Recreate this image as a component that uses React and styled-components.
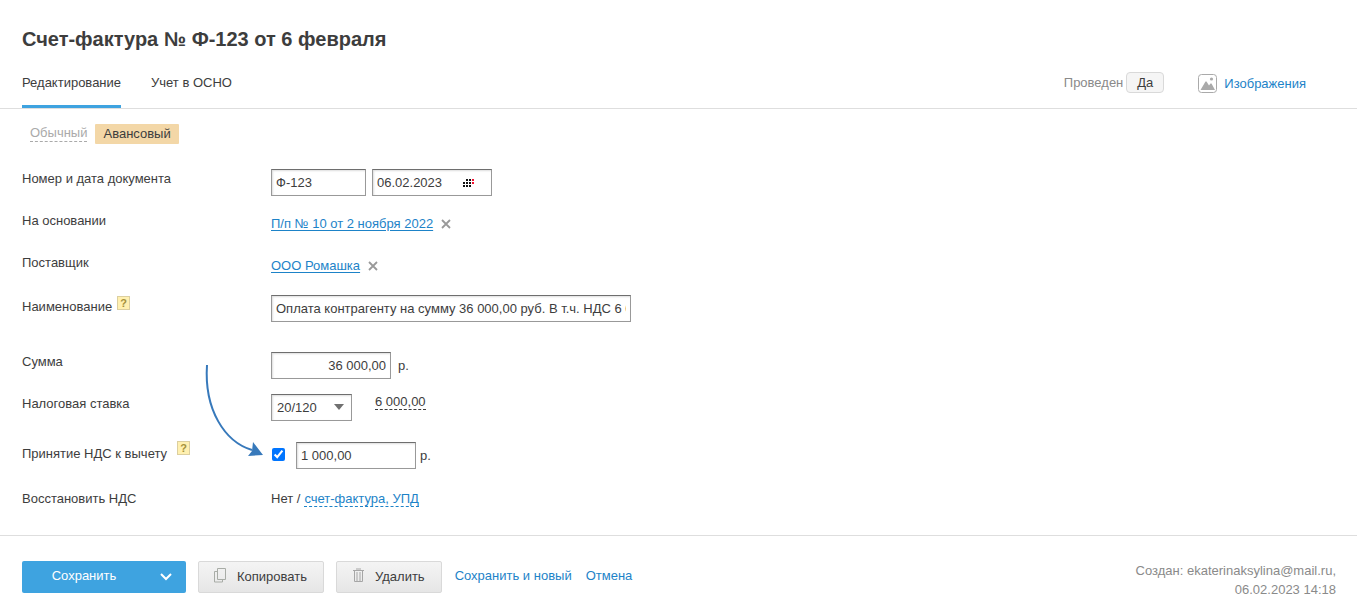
import React from "react";
import styled, { createGlobalStyle, css } from "styled-components";

const GlobalStyle = createGlobalStyle`
  *, *::before, *::after { box-sizing: border-box; }
  body { margin: 0; background: #fff; }
  body, button, input, select {
    font-family: "Liberation Sans", Arial, sans-serif;
    font-size: 13px;
    color: #3d3d3d;
  }
  body { line-height: 20px; }
  button { padding: 0; border: 0; background: none; cursor: pointer; line-height: 20px; }
`;

const Page = styled.main`
  padding-top: 26px;
`;

const Title = styled.h1`
  margin: 0;
  padding: 0 22px;
  font-size: 20px;
  line-height: 26px;
`;

const TabBar = styled.div`
  display: flex;
  justify-content: space-between;
  align-items: flex-end;
  margin-top: 20px;
  padding: 0 51px 0 22px;
  border-bottom: 1px solid #dedede;
`;

const Tabs = styled.nav`
  display: flex;
  gap: 30px;
`;

const Tab = styled.a`
  height: 36px;
  margin-top: -1px;
  padding-top: 1px;
  color: inherit;
  text-decoration: none;
  border-bottom: 3px solid ${(p) => (p.$active ? "#3ea3e0" : "transparent")};
`;

const Status = styled.div`
  display: flex;
  align-items: center;
  height: 21px;
  margin-bottom: 15px;
`;

const StatusLabel = styled.span`
  color: #8a8a8a;
`;

const StatusButton = styled.button`
  width: 38px;
  height: 21px;
  margin: 0 34px 0 3px;
  border: 1px solid #d9d9d9;
  border-radius: 4px;
  background: #f5f5f5;
`;

const ImagesLink = styled.a`
  display: flex;
  align-items: center;
  gap: 7px;
  padding-top: 2px;
  color: #1d83c8;
  text-decoration: none;
`;

const KindSwitch = styled.div`
  display: flex;
  gap: 8px;
  padding: 15px 30px 0;
`;

const dashed = css`
  line-height: 16px;
  border-bottom: 1px dashed currentColor;
`;

const KindOption = styled.button`
  ${(p) =>
    p.$selected
      ? css`
          height: 20px;
          padding: 0 8px;
          background: #f3d7a7;
          border-radius: 1px;
        `
      : css`
          ${dashed}
          height: 18px;
          color: #aaa;
        `}
`;

const Form = styled.form`
  position: relative;
  padding: 25px 22px 0;
`;

const Row = styled.div`
  display: grid;
  grid-template-columns: 249px 1fr;
  align-items: start;
  min-height: ${(p) => p.$height}px;
`;

const Label = styled.label`
  padding-top: ${(p) => p.$top || 0}px;
`;

const LabelCell = styled.div`
  display: flex;
  align-items: flex-start;
  gap: ${(p) => p.$gap}px;
`;

const Help = styled.button`
  width: 13px;
  height: 14px;
  margin-top: 1px;
  border: 1px solid #dccf9f;
  background: #fff0b0;
  color: #a5913c;
  font-size: 11px;
  font-weight: bold;
  line-height: 12px;
`;

const Value = styled.div`
  display: flex;
  align-items: ${(p) => p.$align || "center"};
  padding-top: ${(p) => p.$top || 0}px;
`;

const box = css`
  height: 27px;
  border: 1px solid #999;
  border-top-color: #6e6e6e;
  background: #fff;
  box-shadow: inset 1px 1px 2px #ddd;
`;

const Input = styled.input`
  ${box}
  width: ${(p) => p.$width}px;
  padding: 0 4px;
  text-align: ${(p) => p.$align || "left"};
  outline: none;
`;

const DateBox = styled.div`
  ${box}
  display: flex;
  align-items: center;
  width: 120px;
  margin-left: 6px;
  padding-left: 4px;
`;

const DateInput = styled.input`
  width: 86px;
  padding: 0;
  border: 0;
  background: none;
  outline: none;
`;

const CalendarButton = styled.button`
  display: flex;
`;

const DocLink = styled.a`
  color: #1d83c8;
  text-decoration: underline;
  text-underline-offset: 2px;
`;

const Clear = styled.button`
  display: flex;
  margin-left: 8px;
`;

const SelectBox = styled.div`
  position: relative;
  display: flex;
`;

const Select = styled.select`
  ${box}
  width: 81px;
  padding: 0 5px;
  appearance: none;
  border-radius: 0;
  outline: none;
`;

const SelectArrow = styled.svg`
  position: absolute;
  right: 8px;
  top: 10px;
  pointer-events: none;
`;

const InlineEdit = styled.button`
  ${dashed}
  height: 16px;
  color: ${(p) => (p.$link ? "#1d83c8" : "inherit")};
  margin-left: ${(p) => (p.$link ? 4 : 23)}px;
`;

const Unit = styled.span`
  margin-left: ${(p) => p.$gap}px;
`;

const Check = styled.input`
  width: 13px;
  height: 13px;
  margin: 0 11px 3px 1px;
`;

const Pointer = styled.svg`
  position: absolute;
  left: 200px;
  top: 216px;
  pointer-events: none;
`;

const Footer = styled.footer`
  display: flex;
  justify-content: space-between;
  align-items: flex-start;
  margin-top: 16px;
  padding: 25px 21px 14px 22px;
  border-top: 1px solid #dedede;
`;

const Actions = styled.div`
  display: flex;
  gap: 12px;
`;

const SplitButton = styled.div`
  display: flex;
`;

const Save = styled.button`
  width: 124px;
  height: 32px;
  padding-bottom: 2px;
  border-radius: 2px 0 0 2px;
  background: #3ea3e0;
  color: #fff;
`;

const SaveMore = styled.button`
  display: flex;
  align-items: center;
  justify-content: center;
  width: 40px;
  height: 32px;
  border-radius: 0 2px 2px 0;
  background: #3ea3e0;
`;

const GrayButton = styled.button`
  display: flex;
  align-items: center;
  gap: 10px;
  height: 32px;
  padding: 0 16px 0 15px;
  border: 1px solid #d9d9d9;
  border-radius: 2px;
  background: linear-gradient(#f4f4f4, #e6e6e6);

  svg { margin-bottom: 4px; }
`;

const TextActions = styled.div`
  display: flex;
  gap: 14px;
  margin-left: 1px;
  padding-top: 5px;
`;

const TextAction = styled.a`
  color: #1d83c8;
  text-decoration: none;
`;

const Created = styled.div`
  color: #8a8a8a;
  text-align: right;
  line-height: 19px;
`;

const CrossIcon = () => (
  <svg width="10" height="10" viewBox="0 0 10 10" fill="none" stroke="#999" strokeWidth="1.8">
    <path d="M1 1l8 8M9 1L1 9" />
  </svg>
);

const calendarDots = [
  [3, 0], [6, 0], [9, 0],
  [0, 3], [3, 3], [6, 3], [9, 3],
  [0, 6], [3, 6], [6, 6],
];

const CalendarIcon = () => (
  <svg width="11" height="8" shapeRendering="crispEdges">
    {calendarDots.map(([x, y]) => (
      <rect key={`${x}-${y}`} x={x} y={y} width="2" height="2" fill={x === 9 ? "#f01030" : "#111"} />
    ))}
  </svg>
);

const PictureIcon = () => (
  <svg width="19" height="19" viewBox="0 0 19 19">
    <rect x="0.5" y="0.5" width="18" height="18" rx="3" fill="#fff" stroke="#aaa" />
    <path d="M2.500 16L7.500 7.500h1L11 11.500l1.500-2h1L17 16z" fill="#aaa" />
    <circle cx="13.500" cy="5" r="1.600" fill="#aaa" />
  </svg>
);

const CopyIcon = () => (
  <svg width="13" height="15" viewBox="0 0 13 15" fill="none" stroke="#a8aca6">
    <path d="M3.500 0.500h8v11h-8zM3 3.500H0.500v10.500h8V12" />
  </svg>
);

const TrashIcon = () => (
  <svg width="13" height="15" viewBox="0 0 13 15" fill="none" stroke="#a6a6a6">
    <path d="M1 2.500h11M4 1h5M2.500 3v10.500h8V3M5 4v9M8 4v9" />
  </svg>
);

export default function App() {
  return (
    <Page>
      <GlobalStyle />
      <Title>Счет-фактура № Ф-123 от 6 февраля</Title>
      <TabBar>
        <Tabs>
          <Tab href="#edit" $active>Редактирование</Tab>
          <Tab href="#osno">Учет в ОСНО</Tab>
        </Tabs>
        <Status>
          <StatusLabel>Проведен</StatusLabel>
          <StatusButton type="button">Да</StatusButton>
          <ImagesLink href="#images">
            <PictureIcon />
            Изображения
          </ImagesLink>
        </Status>
      </TabBar>

      <KindSwitch>
        <KindOption type="button">Обычный</KindOption>
        <KindOption type="button" $selected>Авансовый</KindOption>
      </KindSwitch>

      <Form id="invoice">
        <Row $height={42}>
          <Label htmlFor="number">Номер и дата документа</Label>
          <Value>
            <Input id="number" $width={95} defaultValue="Ф-123" />
            <DateBox>
              <DateInput aria-label="Дата документа" defaultValue="06.02.2023" />
              <CalendarButton type="button" aria-label="Календарь"><CalendarIcon /></CalendarButton>
            </DateBox>
          </Value>
        </Row>
        <Row $height={42}>
          <span>На основании</span>
          <Value $top={3}>
            <DocLink href="#payment">П/п № 10 от 2 ноября 2022</DocLink>
            <Clear type="button" aria-label="Убрать основание"><CrossIcon /></Clear>
          </Value>
        </Row>
        <Row $height={42}>
          <span>Поставщик</span>
          <Value $top={3}>
            <DocLink href="#supplier">ООО Ромашка</DocLink>
            <Clear type="button" aria-label="Убрать поставщика"><CrossIcon /></Clear>
          </Value>
        </Row>
        <Row $height={57}>
          <LabelCell $gap={5}>
            <Label htmlFor="name" $top={2}>Наименование</Label>
            <Help type="button">?</Help>
          </LabelCell>
          <Value>
            <Input id="name" $width={360} defaultValue="Оплата контрагенту на сумму 36 000,00 руб. В т.ч. НДС 6 000,00 руб." />
          </Value>
        </Row>
        <Row $height={42}>
          <Label htmlFor="sum">Сумма</Label>
          <Value>
            <Input id="sum" $width={120} $align="right" defaultValue="36 000,00" />
            <Unit $gap={7}>р.</Unit>
          </Value>
        </Row>
        <Row $height={46}>
          <Label htmlFor="rate">Налоговая ставка</Label>
          <Value $align="flex-start">
            <SelectBox>
              <Select id="rate" defaultValue="20/120">
                <option>20/120</option>
                <option>10/110</option>
              </Select>
              <SelectArrow width="10" height="6"><path d="M0 0h10L5 6z" fill="#707070" /></SelectArrow>
            </SelectBox>
            <InlineEdit type="button">6 000,00</InlineEdit>
          </Value>
        </Row>
        <Row $height={49}>
          <LabelCell $gap={10}>
            <Label htmlFor="deduct" $top={4}>Принятие НДС к вычету</Label>
            <Help type="button">?</Help>
          </LabelCell>
          <Value $top={2}>
            <Check id="deduct" type="checkbox" defaultChecked />
            <Input aria-label="Сумма к вычету" $width={120} defaultValue="1 000,00" />
            <Unit $gap={4}>р.</Unit>
          </Value>
        </Row>
        <Row $height={30}>
          <span>Восстановить НДС</span>
          <Value>
            Нет / <InlineEdit type="button" $link>счет-фактура, УПД</InlineEdit>
          </Value>
        </Row>
        <Pointer width="66" height="98" viewBox="0 0 66 98">
          <path d="M7 5C4 50 25 82 52 90" fill="none" stroke="#3779bb" strokeWidth="2" />
          <path d="M53 82L63 95L48 96L52 91z" fill="#3779bb" />
        </Pointer>
      </Form>

      <Footer>
        <Actions>
          <SplitButton>
            <Save type="submit" form="invoice">Сохранить</Save>
            <SaveMore type="button" aria-label="Другие варианты сохранения">
              <svg width="12" height="8" fill="none" stroke="#fff" strokeWidth="2"><path d="M1 1l5 5 5-5" /></svg>
            </SaveMore>
          </SplitButton>
          <GrayButton type="button"><CopyIcon />Копировать</GrayButton>
          <GrayButton type="button"><TrashIcon />Удалить</GrayButton>
          <TextActions>
            <TextAction href="#save-new">Сохранить и новый</TextAction>
            <TextAction href="#cancel">Отмена</TextAction>
          </TextActions>
        </Actions>
        <Created>
          Создан: ekaterinaksylina@mail.ru,<br />06.02.2023 14:18
        </Created>
      </Footer>
    </Page>
  );
}
